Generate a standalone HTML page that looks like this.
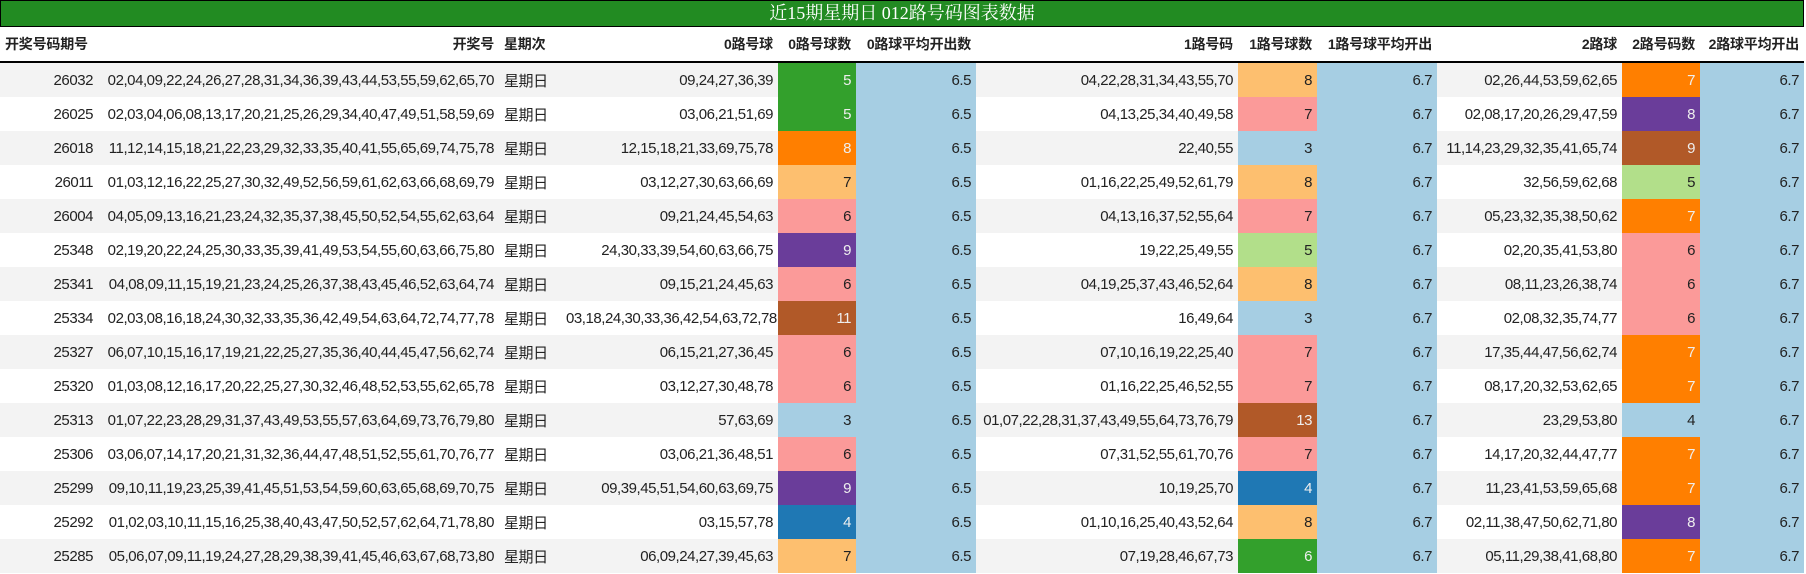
<!DOCTYPE html>
<html><head><meta charset="utf-8">
<style>
html,body{margin:0;padding:0;background:#fff;}
body{width:1806px;height:574px;overflow:hidden;font-family:"Liberation Sans","Noto Sans CJK SC",sans-serif;color:#222;}
.title{position:absolute;left:0;top:0;width:1802px;height:25px;background:#228b22;border:1px solid #000;color:#fff;font-family:"Liberation Serif","Noto Serif CJK SC",serif;font-size:18px;line-height:25px;text-align:center;}
table{position:absolute;left:0;top:27px;border-collapse:collapse;table-layout:fixed;width:1804px;font-size:15px;letter-spacing:-0.45px;}
th{height:34px;font-weight:bold;font-size:14px;text-align:right;padding:0 5px;border-bottom:2px solid #000;white-space:nowrap;overflow:hidden;letter-spacing:-0.2px;}
td{height:34px;padding:0 5px;text-align:right;white-space:nowrap;overflow:hidden;}
tr.g td{background:#f3f3f3;}
.l{text-align:left;}
tr td.a{background:#a6cee3;}
tr td.c1{background:#33a02c;color:#eee;}
tr td.c2{background:#ff7f00;color:#eee;}
tr td.c3{background:#fdbf6f;}
tr td.c4{background:#fb9a99;}
tr td.c5{background:#6a3d9a;color:#eee;}
tr td.c6{background:#b15928;color:#eee;}
tr td.c7{background:#a6cee3;}
tr td.c8{background:#1f78b4;color:#eee;}
tr td.c9{background:#b2df8a;}
</style></head><body>
<div class="title">近15期星期日 012路号码图表数据</div>
<table>
<colgroup><col style="width:98px"><col style="width:401px"><col style="width:62px"><col style="width:217px"><col style="width:78px"><col style="width:120px"><col style="width:262px"><col style="width:79px"><col style="width:120px"><col style="width:185px"><col style="width:78px"><col style="width:104px"></colgroup>
<tr><th class="l">开奖号码期号</th><th>开奖号</th><th class="l">星期次</th><th>0路号球</th><th>0路号球数</th><th>0路球平均开出数</th><th>1路号码</th><th>1路号球数</th><th>1路号球平均开出</th><th>2路球</th><th>2路号码数</th><th>2路球平均开出</th></tr>
<tr class="g"><td>26032</td><td>02,04,09,22,24,26,27,28,31,34,36,39,43,44,53,55,59,62,65,70</td><td class="l">星期日</td><td>09,24,27,36,39</td><td class="c1">5</td><td class="a">6.5</td><td>04,22,28,31,34,43,55,70</td><td class="c3">8</td><td class="a">6.7</td><td>02,26,44,53,59,62,65</td><td class="c2">7</td><td class="a">6.7</td></tr>
<tr><td>26025</td><td>02,03,04,06,08,13,17,20,21,25,26,29,34,40,47,49,51,58,59,69</td><td class="l">星期日</td><td>03,06,21,51,69</td><td class="c1">5</td><td class="a">6.5</td><td>04,13,25,34,40,49,58</td><td class="c4">7</td><td class="a">6.7</td><td>02,08,17,20,26,29,47,59</td><td class="c5">8</td><td class="a">6.7</td></tr>
<tr class="g"><td>26018</td><td>11,12,14,15,18,21,22,23,29,32,33,35,40,41,55,65,69,74,75,78</td><td class="l">星期日</td><td>12,15,18,21,33,69,75,78</td><td class="c2">8</td><td class="a">6.5</td><td>22,40,55</td><td class="c7">3</td><td class="a">6.7</td><td>11,14,23,29,32,35,41,65,74</td><td class="c6">9</td><td class="a">6.7</td></tr>
<tr><td>26011</td><td>01,03,12,16,22,25,27,30,32,49,52,56,59,61,62,63,66,68,69,79</td><td class="l">星期日</td><td>03,12,27,30,63,66,69</td><td class="c3">7</td><td class="a">6.5</td><td>01,16,22,25,49,52,61,79</td><td class="c3">8</td><td class="a">6.7</td><td>32,56,59,62,68</td><td class="c9">5</td><td class="a">6.7</td></tr>
<tr class="g"><td>26004</td><td>04,05,09,13,16,21,23,24,32,35,37,38,45,50,52,54,55,62,63,64</td><td class="l">星期日</td><td>09,21,24,45,54,63</td><td class="c4">6</td><td class="a">6.5</td><td>04,13,16,37,52,55,64</td><td class="c4">7</td><td class="a">6.7</td><td>05,23,32,35,38,50,62</td><td class="c2">7</td><td class="a">6.7</td></tr>
<tr><td>25348</td><td>02,19,20,22,24,25,30,33,35,39,41,49,53,54,55,60,63,66,75,80</td><td class="l">星期日</td><td>24,30,33,39,54,60,63,66,75</td><td class="c5">9</td><td class="a">6.5</td><td>19,22,25,49,55</td><td class="c9">5</td><td class="a">6.7</td><td>02,20,35,41,53,80</td><td class="c4">6</td><td class="a">6.7</td></tr>
<tr class="g"><td>25341</td><td>04,08,09,11,15,19,21,23,24,25,26,37,38,43,45,46,52,63,64,74</td><td class="l">星期日</td><td>09,15,21,24,45,63</td><td class="c4">6</td><td class="a">6.5</td><td>04,19,25,37,43,46,52,64</td><td class="c3">8</td><td class="a">6.7</td><td>08,11,23,26,38,74</td><td class="c4">6</td><td class="a">6.7</td></tr>
<tr><td>25334</td><td>02,03,08,16,18,24,30,32,33,35,36,42,49,54,63,64,72,74,77,78</td><td class="l">星期日</td><td>03,18,24,30,33,36,42,54,63,72,78</td><td class="c6">11</td><td class="a">6.5</td><td>16,49,64</td><td class="c7">3</td><td class="a">6.7</td><td>02,08,32,35,74,77</td><td class="c4">6</td><td class="a">6.7</td></tr>
<tr class="g"><td>25327</td><td>06,07,10,15,16,17,19,21,22,25,27,35,36,40,44,45,47,56,62,74</td><td class="l">星期日</td><td>06,15,21,27,36,45</td><td class="c4">6</td><td class="a">6.5</td><td>07,10,16,19,22,25,40</td><td class="c4">7</td><td class="a">6.7</td><td>17,35,44,47,56,62,74</td><td class="c2">7</td><td class="a">6.7</td></tr>
<tr><td>25320</td><td>01,03,08,12,16,17,20,22,25,27,30,32,46,48,52,53,55,62,65,78</td><td class="l">星期日</td><td>03,12,27,30,48,78</td><td class="c4">6</td><td class="a">6.5</td><td>01,16,22,25,46,52,55</td><td class="c4">7</td><td class="a">6.7</td><td>08,17,20,32,53,62,65</td><td class="c2">7</td><td class="a">6.7</td></tr>
<tr class="g"><td>25313</td><td>01,07,22,23,28,29,31,37,43,49,53,55,57,63,64,69,73,76,79,80</td><td class="l">星期日</td><td>57,63,69</td><td class="c7">3</td><td class="a">6.5</td><td>01,07,22,28,31,37,43,49,55,64,73,76,79</td><td class="c6">13</td><td class="a">6.7</td><td>23,29,53,80</td><td class="c7">4</td><td class="a">6.7</td></tr>
<tr><td>25306</td><td>03,06,07,14,17,20,21,31,32,36,44,47,48,51,52,55,61,70,76,77</td><td class="l">星期日</td><td>03,06,21,36,48,51</td><td class="c4">6</td><td class="a">6.5</td><td>07,31,52,55,61,70,76</td><td class="c4">7</td><td class="a">6.7</td><td>14,17,20,32,44,47,77</td><td class="c2">7</td><td class="a">6.7</td></tr>
<tr class="g"><td>25299</td><td>09,10,11,19,23,25,39,41,45,51,53,54,59,60,63,65,68,69,70,75</td><td class="l">星期日</td><td>09,39,45,51,54,60,63,69,75</td><td class="c5">9</td><td class="a">6.5</td><td>10,19,25,70</td><td class="c8">4</td><td class="a">6.7</td><td>11,23,41,53,59,65,68</td><td class="c2">7</td><td class="a">6.7</td></tr>
<tr><td>25292</td><td>01,02,03,10,11,15,16,25,38,40,43,47,50,52,57,62,64,71,78,80</td><td class="l">星期日</td><td>03,15,57,78</td><td class="c8">4</td><td class="a">6.5</td><td>01,10,16,25,40,43,52,64</td><td class="c3">8</td><td class="a">6.7</td><td>02,11,38,47,50,62,71,80</td><td class="c5">8</td><td class="a">6.7</td></tr>
<tr class="g"><td>25285</td><td>05,06,07,09,11,19,24,27,28,29,38,39,41,45,46,63,67,68,73,80</td><td class="l">星期日</td><td>06,09,24,27,39,45,63</td><td class="c3">7</td><td class="a">6.5</td><td>07,19,28,46,67,73</td><td class="c1">6</td><td class="a">6.7</td><td>05,11,29,38,41,68,80</td><td class="c2">7</td><td class="a">6.7</td></tr>
</table>
</body></html>
